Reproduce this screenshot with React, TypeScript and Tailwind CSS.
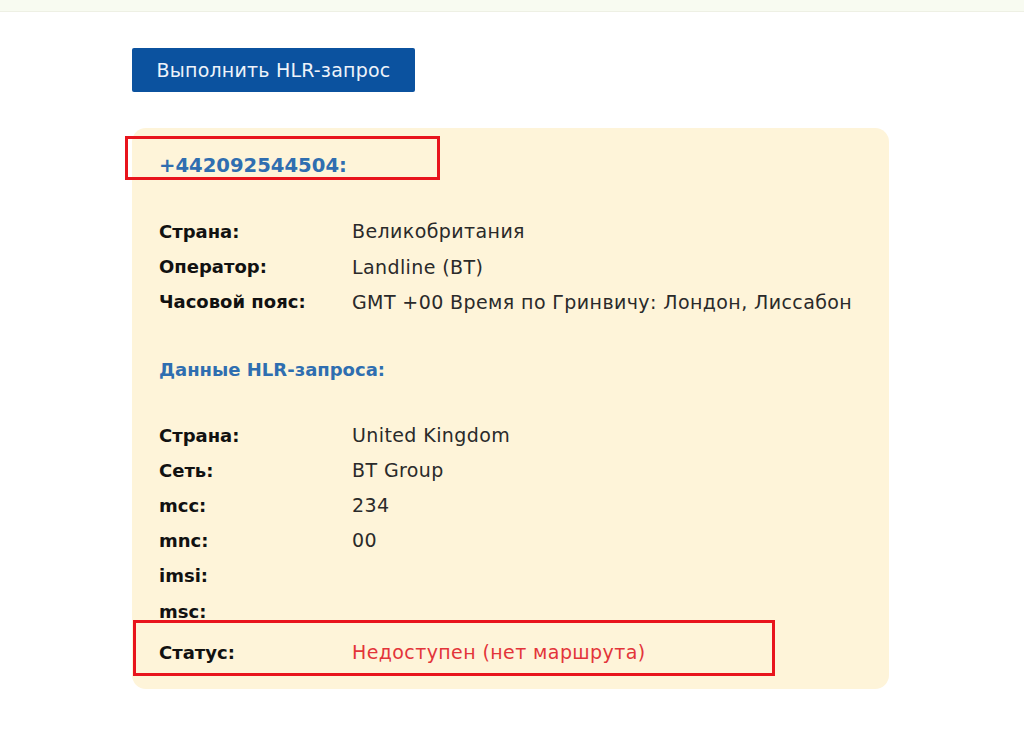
const font = { fontFamily: '"DejaVu Sans", "Noto Sans", sans-serif' };

type Row = { label: string; value?: string; red?: boolean };

const phoneRows: Row[] = [
  { label: 'Страна:', value: 'Великобритания' },
  { label: 'Оператор:', value: 'Landline (BT)' },
  { label: 'Часовой пояс:', value: 'GMT +00 Время по Гринвичу: Лондон, Лиссабон' },
];

const hlrRows: Row[] = [
  { label: 'Страна:', value: 'United Kingdom' },
  { label: 'Сеть:', value: 'BT Group' },
  { label: 'mcc:', value: '234' },
  { label: 'mnc:', value: '00' },
  { label: 'imsi:' },
  { label: 'msc:' },
];

function InfoRows({ rows }: { rows: Row[] }) {
  return (
    <div className="flex flex-col">
      {rows.map((r) => (
        <div key={r.label} className="grid h-[35.2px] grid-cols-[193px_1fr] items-center">
          <span className="text-[18px] font-bold text-[#111]">{r.label}</span>
          <span
            className={
              'text-[19px] tracking-[0.4px] ' + (r.red ? 'text-[#e3343a]' : 'text-[#2a2a2a]')
            }
          >
            {r.value}
          </span>
        </div>
      ))}
    </div>
  );
}

export default function App() {
  return (
    <div className="min-h-[733px] bg-white" style={font}>
      <div className="h-[12px] border-b border-[#eef0e4] bg-[#f8fbf1]" />

      <div className="pl-[132px] pt-[36px]">
        <button className="h-[44px] w-[283px] rounded-[2px] bg-[#0b529f] text-[19px] tracking-[0.2px] text-[#eef3fa]">
          Выполнить HLR-запрос
        </button>

        <div className="relative mt-[36px] w-[757px] rounded-[14px] bg-[#fef4d9] px-[27px] pb-[19px] pt-[20px]">
          <div className="flex h-[35px] items-center text-[19.6px] font-bold text-[#2f6eb0]">+442092544504:</div>
          <div className="mt-[31px]">
            <InfoRows rows={phoneRows} />
          </div>

          <div className="mt-[32px] flex h-[35px] items-center text-[18px] font-bold text-[#2f6eb0]">
            Данные HLR-запроса:
          </div>
          <div className="mt-[31px]">
            <InfoRows rows={hlrRows} />
          </div>

          <div className="mt-[6px]">
            <InfoRows rows={[{ label: 'Статус:', value: 'Недоступен (нет маршрута)', red: true }]} />
          </div>

          <div className="pointer-events-none absolute left-[-7px] top-[8px] h-[44px] w-[315px] border-[3px] border-[#e8141c]" />
          <div className="pointer-events-none absolute left-[1px] top-[492px] h-[56px] w-[642px] border-[3px] border-[#e8141c]" />
        </div>
      </div>
    </div>
  );
}
